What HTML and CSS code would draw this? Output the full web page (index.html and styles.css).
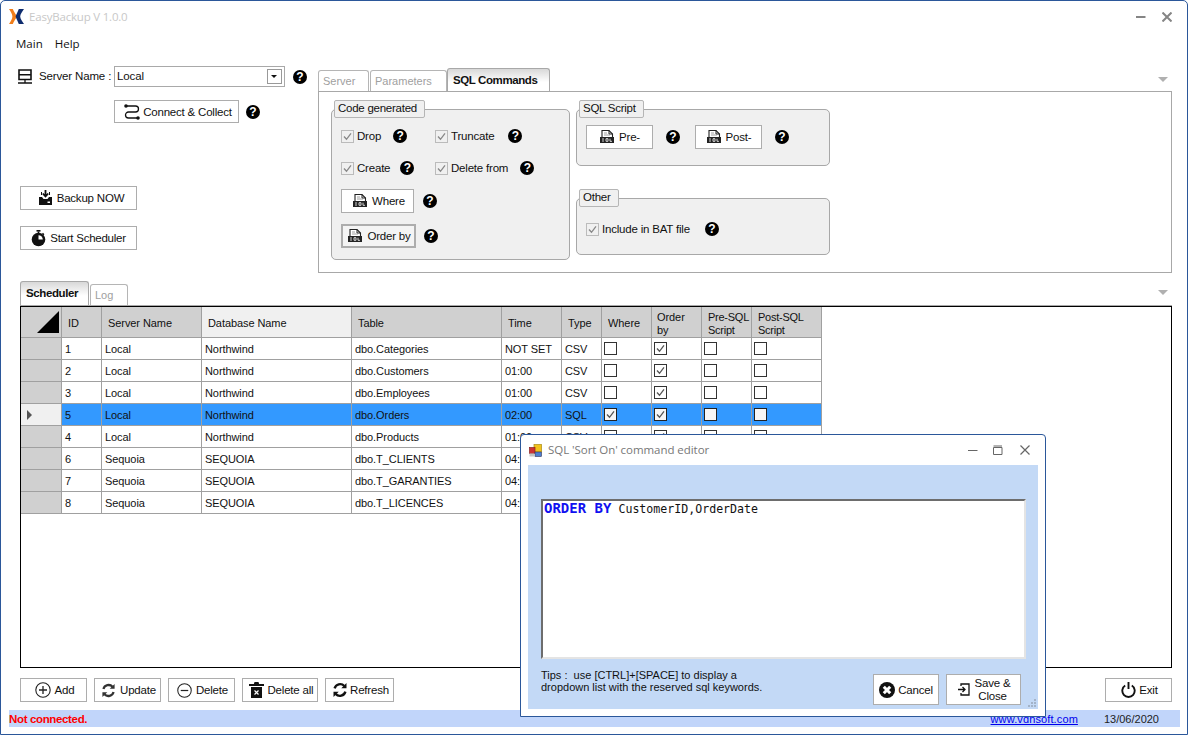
FILE: index.html
```html
<!DOCTYPE html>
<html lang="en">
<head>
<meta charset="utf-8">
<title>EasyBackup</title>
<link rel="stylesheet" href="styles.css">
</head>
<body>
<svg class="defs" width="0" height="0" aria-hidden="true">
  <symbol id="i-sql" viewBox="0 0 16 16">
    <path d="M3 1.500h7l3.500 3.500v8.500H3z" fill="#fff" stroke="#222" stroke-width="1.100"/>
    <path d="M10 1.500V5h3.500" fill="none" stroke="#222" stroke-width="1"/>
    <path d="M5 4h3M5 6h6" stroke="#888" stroke-width=".8"/>
    <rect x="1" y="8" width="14" height="6" fill="#222"/>
    <path d="M3 10h2M3 12h2M7 9.700v2.600h2V9.700zM11 9.700v2.600h2" fill="none" stroke="#fff" stroke-width=".8"/>
  </symbol>
  <symbol id="i-check" viewBox="0 0 13 13">
    <path d="M3 6.500l2.500 2.800L10 3.400" fill="none" stroke="currentColor" stroke-width="1.300"/>
  </symbol>
  <symbol id="i-refresh" viewBox="0 0 16 16">
    <path d="M2.600 6.400A5.700 5.700 0 0 1 12.300 4M13.400 9.600A5.700 5.700 0 0 1 3.700 12" fill="none" stroke="currentColor" stroke-width="2.400"/>
    <path d="M14.500 1v5.200H9.300zM1.500 15V9.800h5.200z" fill="currentColor"/>
  </symbol>
</svg>

<div class="window">
  <header class="titlebar">
    <svg class="logo" viewBox="0 0 15 15" width="15" height="15">
      <path d="M0 0h3.800C4.800 3 7 5 7.800 7.500 7 10 4.800 12 3.800 15H0C1.800 12 3.400 10 3.400 7.500 3.400 5 1.800 3 0 0z" fill="#f07d1a"/>
      <path d="M15 0h-5.200C8.800 3 7.300 5 6.600 7.500 7.300 10 8.800 12 9.800 15H15C13.200 12 11.200 10 11.200 7.500 11.200 5 13.200 3 15 0z" fill="#0e2c6e"/>
    </svg>
    <span class="app-title">EasyBackup V 1.0.0</span>
    <span class="win-controls">
      <svg width="10" height="10" viewBox="0 0 10 10"><path d="M0 5h9.500" stroke="#858585" stroke-width="2"/></svg>
      <svg width="10" height="10" viewBox="0 0 10 10"><path d="M.5.5l9 9M9.500.5l-9 9" stroke="#858585" stroke-width="2"/></svg>
    </span>
  </header>

  <nav class="menu"><span>Main</span><span>Help</span></nav>

  <section class="top">
    <div class="side">
      <div class="server-row">
        <svg class="server-icon" width="14" height="15" viewBox="0 0 14 15">
          <path d="M1 1h12v4.700H1zM1 5.700h12v4.800H1z" fill="none" stroke="#111" stroke-width="1.600"/>
          <path d="M7 10.500V14M0 14h14" stroke="#111" stroke-width="1.300"/>
        </svg>
        <label class="server-label">Server Name :</label>
        <div class="combo"><span>Local</span><i class="combo-btn"></i></div>
        <span class="help">?</span>
      </div>
      <div class="connect-row">
        <button class="btn connect">
          <svg width="18" height="18" viewBox="0 0 18 18"><path d="M3 3h9.500a2.500 2.500 0 0 1 0 6h-7a3 3 0 0 0 0 6H14" fill="none" stroke="#111" stroke-width="1.300"/><circle cx="3" cy="3" r="1.800" fill="#111"/><circle cx="15" cy="15" r="1.800" fill="#111"/></svg>
          Connect &amp; Collect
        </button>
        <span class="help">?</span>
      </div>
      <button class="btn wide backup">
        <svg width="15" height="16" viewBox="0 0 15 16"><path d="M1 7h3l1.500 2h4L11 7h3v8H1z" fill="#111"/><path d="M7.500 0v6M4.800 3.500l2.700 3 2.700-3" fill="none" stroke="#111" stroke-width="1.800"/><path d="M3.500 2v3M11.500 2v3" stroke="#111"/><rect x="9.500" y="11.500" width="2.500" height="1.500" fill="#fff"/></svg>
        Backup NOW
      </button>
      <button class="btn wide sched">
        <svg width="15" height="17" viewBox="0 0 15 17"><rect x="5.500" y="0" width="4" height="1.600" fill="#111"/><path d="M6.700 1.500h1.600V3H6.700zM12 2.800l1.400 1.400-1 1-1.400-1.400z" fill="#111"/><circle cx="7.500" cy="9.500" r="6.800" fill="#111"/><path d="M7.500 9.500V5.200a4.300 4.300 0 0 1 4.300 4.300z" fill="#fff"/></svg>
        Start Scheduler
      </button>
    </div>

    <div class="options">
      <div class="tabs">
        <span class="tab">Server</span>
        <span class="tab params">Parameters</span>
        <span class="tab active sql">SQL Commands</span>
        <i class="fold"></i>
      </div>
      <div class="panel">
        <fieldset class="group code">
          <span class="legend">Code generated</span>
          <div class="checks">
            <div class="check-line"><i class="box"><svg width="13" height="13"><use href="#i-check"/></svg></i><span>Drop</span><span class="help">?</span></div>
            <div class="check-line"><i class="box"><svg width="13" height="13"><use href="#i-check"/></svg></i><span>Truncate</span><span class="help h-trunc">?</span></div>
            <div class="check-line"><i class="box"><svg width="13" height="13"><use href="#i-check"/></svg></i><span>Create</span><span class="help h-create">?</span></div>
            <div class="check-line"><i class="box"><svg width="13" height="13"><use href="#i-check"/></svg></i><span>Delete from</span><span class="help">?</span></div>
          </div>
          <div class="cmd-line where">
            <button class="btn where-btn"><svg width="16" height="16"><use href="#i-sql"/></svg>Where</button>
            <span class="help">?</span>
          </div>
          <div class="cmd-line order">
            <button class="btn order-btn"><svg width="16" height="16"><use href="#i-sql"/></svg>Order by</button>
            <span class="help">?</span>
          </div>
        </fieldset>
        <div class="right-groups">
          <fieldset class="group script">
            <span class="legend">SQL Script</span>
            <div class="script-line">
              <button class="btn script-btn"><svg width="16" height="16"><use href="#i-sql"/></svg>Pre-</button>
              <span class="help">?</span>
              <button class="btn script-btn"><svg width="16" height="16"><use href="#i-sql"/></svg>Post-</button>
              <span class="help">?</span>
            </div>
          </fieldset>
          <fieldset class="group other">
            <span class="legend">Other</span>
            <div class="check-line"><i class="box"><svg width="13" height="13"><use href="#i-check"/></svg></i><span>Include in BAT file</span><span class="help bat">?</span></div>
          </fieldset>
        </div>
      </div>
    </div>
  </section>

  <div class="tabs lower">
    <span class="tab active sched-tab">Scheduler</span>
    <span class="tab log-tab">Log</span>
    <i class="fold"></i>
  </div>

  <div class="frame">
    <table class="grid">
      <colgroup>
        <col class="c-h"><col class="c-id"><col class="c-srv"><col class="c-db"><col class="c-tbl"><col class="c-time"><col class="c-type"><col class="c-chk"><col class="c-chk"><col class="c-chk"><col class="c-post">
      </colgroup>
      <thead>
        <tr>
          <th class="corner"><i></i></th><th>ID</th><th>Server Name</th><th class="sorted">Database Name</th><th>Table</th><th>Time</th><th>Type</th><th>Where</th><th class="order-head">Order<br>by</th><th class="tight">Pre-SQL Script</th><th class="tight">Post-SQL<br>Script</th>
        </tr>
      </thead>
      <tbody>
        <tr><th></th><td>1</td><td>Local</td><td>Northwind</td><td>dbo.Categories</td><td>NOT SET</td><td>CSV</td><td><i class="cell-box"></i></td><td><i class="cell-box"><svg width="13" height="13"><use href="#i-check"/></svg></i></td><td><i class="cell-box"></i></td><td><i class="cell-box"></i></td></tr>
        <tr><th></th><td>2</td><td>Local</td><td>Northwind</td><td>dbo.Customers</td><td>01:00</td><td>CSV</td><td><i class="cell-box"></i></td><td><i class="cell-box"><svg width="13" height="13"><use href="#i-check"/></svg></i></td><td><i class="cell-box"></i></td><td><i class="cell-box"></i></td></tr>
        <tr><th></th><td>3</td><td>Local</td><td>Northwind</td><td>dbo.Employees</td><td>01:00</td><td>CSV</td><td><i class="cell-box"></i></td><td><i class="cell-box"><svg width="13" height="13"><use href="#i-check"/></svg></i></td><td><i class="cell-box"></i></td><td><i class="cell-box"></i></td></tr>
        <tr class="selected"><th><i class="row-arrow"></i></th><td>5</td><td>Local</td><td>Northwind</td><td>dbo.Orders</td><td>02:00</td><td>SQL</td><td><i class="cell-box"><svg width="13" height="13"><use href="#i-check"/></svg></i></td><td><i class="cell-box"><svg width="13" height="13"><use href="#i-check"/></svg></i></td><td><i class="cell-box"></i></td><td><i class="cell-box"></i></td></tr>
        <tr><th></th><td>4</td><td>Local</td><td>Northwind</td><td>dbo.Products</td><td>01:00</td><td>CSV</td><td><i class="cell-box"></i></td><td><i class="cell-box"><svg width="13" height="13"><use href="#i-check"/></svg></i></td><td><i class="cell-box"></i></td><td><i class="cell-box"></i></td></tr>
        <tr><th></th><td>6</td><td>Sequoia</td><td>SEQUOIA</td><td>dbo.T_CLIENTS</td><td>04:00</td><td>CSV</td><td><i class="cell-box"></i></td><td><i class="cell-box"></i></td><td><i class="cell-box"></i></td><td><i class="cell-box"></i></td></tr>
        <tr><th></th><td>7</td><td>Sequoia</td><td>SEQUOIA</td><td>dbo.T_GARANTIES</td><td>04:00</td><td>CSV</td><td><i class="cell-box"></i></td><td><i class="cell-box"></i></td><td><i class="cell-box"></i></td><td><i class="cell-box"></i></td></tr>
        <tr><th></th><td>8</td><td>Sequoia</td><td>SEQUOIA</td><td>dbo.T_LICENCES</td><td>04:00</td><td>CSV</td><td><i class="cell-box"></i></td><td><i class="cell-box"></i></td><td><i class="cell-box"></i></td><td><i class="cell-box"></i></td></tr>
      </tbody>
    </table>
  </div>

  <div class="actions">
    <button class="btn act add"><svg width="16" height="16" viewBox="0 0 16 16"><circle cx="8" cy="8" r="7.200" fill="none" stroke="#222" stroke-width="1.100"/><path d="M8 4v8M4 8h8" stroke="#222" stroke-width="1.300"/></svg>Add</button>
    <button class="btn act update"><svg class="ic-grey" width="15" height="15"><use href="#i-refresh"/></svg>Update</button>
    <button class="btn act add"><svg width="15" height="15" viewBox="0 0 16 16"><circle cx="8" cy="8" r="7.200" fill="none" stroke="#222" stroke-width="1.100"/><path d="M4 8h8" stroke="#222" stroke-width="1.300"/></svg>Delete</button>
    <button class="btn act delall"><svg width="15" height="16" viewBox="0 0 15 16"><path d="M5.500 0h4l.6 2H15v2H0V2h4.900z" fill="#111"/><path d="M2 5h11v11H2z" fill="#111"/><path d="M5.500 8.500l4 4M9.500 8.500l-4 4" stroke="#fff" stroke-width="1.200"/></svg>Delete all</button>
    <button class="btn act refresh"><svg class="ic-dark" width="16" height="16"><use href="#i-refresh"/></svg>Refresh</button>
    <button class="btn act exit"><svg width="15" height="16" viewBox="0 0 15 16"><path d="M4.200 3.500a6.200 6.200 0 1 0 6.600 0" fill="none" stroke="#111" stroke-width="1.900"/><path d="M7.500 0v7" stroke="#111" stroke-width="1.900"/></svg>Exit</button>
  </div>

  <footer class="status">
    <span class="not-conn">Not connected.</span>
    <a class="site" href="#">www.vdhsoft.com</a>
    <span class="date">13/06/2020</span>
  </footer>

  <aside class="dialog">
    <div class="dlg-title">
      <svg width="13" height="13" viewBox="0 0 13 13"><rect x="5" y=".5" width="7.500" height="7.500" fill="#f2c21d" stroke="#a88a12" stroke-width=".7"/><rect x=".5" y="3.500" width="5.500" height="6" fill="#c33" stroke="#822" stroke-width=".7"/><rect x="6" y="8" width="6.500" height="4.500" fill="#4d7fd0" stroke="#335" stroke-width=".6"/><rect x=".5" y="9.500" width="5" height="3" fill="#c4c4c4"/></svg>
      <span class="dlg-name">SQL 'Sort On' command editor</span>
      <span class="dlg-controls">
        <svg width="10" height="10" viewBox="0 0 10 10"><path d="M0 5.500h9.500" stroke="#666"/></svg>
        <svg width="10" height="10" viewBox="0 0 10 10"><path d="M.5 2.500h8.500v7H.5zM.5 1h8.500" fill="none" stroke="#666"/></svg>
        <svg width="10" height="10" viewBox="0 0 10 10"><path d="M.5.5l9 9M9.500.5l-9 9" stroke="#666" stroke-width="1.200"/></svg>
      </span>
    </div>
    <div class="dlg-body">
      <div class="editor"><b>ORDER BY</b> <span>CustomerID,OrderDate</span></div>
      <div class="dlg-foot">
        <p class="tips">Tips :&nbsp; use [CTRL]+[SPACE] to display a<br>dropdown list with the reserved sql keywords.</p>
        <button class="btn dlg-btn cancel"><svg width="16" height="16" viewBox="0 0 16 16"><circle cx="8" cy="8" r="8" fill="#111"/><path d="M4.800 4.800l6.400 6.400M11.200 4.800l-6.400 6.400" stroke="#fff" stroke-width="3"/></svg>Cancel</button>
        <button class="btn dlg-btn save"><svg width="13" height="13" viewBox="0 0 13 13"><path d="M4 3V1h8v11H4v-2" fill="none" stroke="#111" stroke-width="1.300"/><path d="M1 6.500h7M5.500 4l2.500 2.500L5.500 9" fill="none" stroke="#111" stroke-width="1.300"/></svg><span>Save &amp;<br>Close</span></button>
      </div>
      <svg class="grip" width="9" height="9" viewBox="0 0 9 9"><path d="M6 0h2v2H6zM3 3h2v2H3zM6 3h2v2H6zM0 6h2v2H0zM3 6h2v2H3zM6 6h2v2H6z" fill="#a3b3c8"/></svg>
    </div>
  </aside>
</div>
</body>
</html>
```

FILE: styles.css
```css
* { box-sizing: border-box; }
html, body { margin: 0; padding: 0; }
body { width: 1188px; height: 735px; overflow: hidden; background: #fff; font: 11.500px "Liberation Sans", Arial, sans-serif; color: #111; }
.defs { position: absolute; }

.window { position: relative; width: 1188px; height: 735px; border: 1px solid #2b579a; border-radius: 5px 5px 0 0; padding: 0 15px 0 19px; background: #fff; }

.titlebar { height: 31px; margin-left: -11px; display: flex; align-items: center; gap: 5px; }
.logo { display: block; }
.app-title { font: 11.500px "Open Sans", sans-serif; color: #c8c8c8; letter-spacing: -.2px; }
.win-controls { margin-left: auto; display: flex; gap: 16px; padding-top: 1px; }

.menu { height: 24px; margin-left: -4px; padding-bottom: 2px; display: flex; gap: 12px; align-items: center; font: 11.500px "Open Sans", sans-serif; color: #111; }

.top { display: flex; height: 217px; }
.side { width: 298px; padding-top: 10px; flex: none; }
.server-row { display: flex; align-items: center; height: 21px; margin-left: -2px; }
.server-label { margin-left: 7px; width: 75px; padding-bottom: 2px; letter-spacing: -.15px; }
.combo { width: 171px; height: 21px; border: 1px solid #a9a9a9; display: flex; align-items: center; justify-content: space-between; padding: 0 2px; }
.combo span { letter-spacing: -.1px; padding-bottom: 1px; }
.combo-btn { width: 15px; height: 15px; border: 1px solid #999; position: relative; display: block; }
.combo-btn::after { content: ""; position: absolute; left: 3px; top: 5px; border: 3px solid transparent; border-top: 3px solid #111; border-bottom: 0; }
.server-row .help { margin-left: 8px; }
.connect-row { display: flex; align-items: center; margin: 13px 0 0 94px; gap: 7px; }

.help { display: inline-flex; width: 14px; height: 14px; flex: none; align-items: center; justify-content: center; border-radius: 50%; background: #000; color: #fff; font: bold 12px/14px "Liberation Sans", sans-serif; }

.btn { display: inline-flex; align-items: center; justify-content: center; gap: 4px; padding: 0; height: 24px; background: #fff; border: 1px solid #adadad; border-radius: 0; color: #111; font: 11.500px "Liberation Sans", sans-serif; letter-spacing: -.2px; white-space: nowrap; }
.btn svg { flex: none; }
.connect { width: 125px; height: 23px; gap: 2px; padding-left: 2px; }
.wide { width: 117px; display: flex; }
.backup { margin-top: 63px; padding-left: 5px; }
.sched { margin-top: 16px; letter-spacing: -.25px; }

.options { flex: 1; padding-top: 12px; }
.tabs { display: flex; align-items: flex-end; height: 23px; position: relative; }
.tab { display: block; height: 21px; border: 1px solid #b5b5b5; border-bottom: 0; border-radius: 3px 3px 0 0; margin-right: 1px; padding: 4px 0 0 4px; width: 51px; font-size: 11px; color: #a0a0a0; }
.params { width: 77px; margin-right: 0; }
.tab.active { height: 23px; color: #111; font-weight: bold; font-size: 11.500px; letter-spacing: -.4px; background: linear-gradient(#d8d8d8, #fff 60%); border-color: #a8a8a8; }
.sql { width: 103px; padding: 5px 0 0 5px; }
.fold { margin-left: auto; margin-right: 4px; margin-bottom: 9px; width: 0; height: 0; border: 5px solid transparent; border-top: 5px solid #b0b0b0; border-bottom: 0; }

.panel { height: 182px; border: 1px solid #a8a8a8; padding: 8px 0 0 12px; display: flex; gap: 6px; }
.group { position: relative; margin: 9px 0 0; padding: 0; border: 1px solid #a8a8a8; border-radius: 5px; background: #f0f0f0; min-width: 0; }
.legend { position: absolute; top: -10px; left: 2px; height: 18px; padding: 0 7px 0 3px; line-height: 15px; border: 1px solid #b5b5b5; border-radius: 2px; background: #f0f0f0; letter-spacing: -.25px; }
.code { width: 239px; height: 151px; padding: 18px 0 0 9px; }
.checks { display: grid; grid-template-columns: 94px 120px; row-gap: 16px; }
.check-line { display: flex; align-items: center; height: 16px; letter-spacing: -.2px; }
.box { width: 13px; height: 13px; margin-right: 3px; border: 1px solid #bbb; background: #f0f0f0; color: #888; display: block; flex: none; }
.box svg { display: block; margin: -1px; }
.check-line .help { margin-left: 12px; }
.check-line .h-trunc { margin-left: 14px; }
.check-line .h-create { margin-left: 10px; }
.cmd-line { display: flex; align-items: center; gap: 9px; }
.where { margin-top: 13px; }
.order { margin-top: 11px; }
.where-btn { width: 73px; padding-left: 2px; }
.order-btn { width: 75px; border-width: 2px; background: #f4f4f4; gap: 4px; padding-left: 1px; }
.order-btn + .help { margin-left: -1px; }

.right-groups { width: 254px; }
.script { height: 57px; padding: 15px 0 0 9px; }
.script-line { display: flex; align-items: center; }
.script-btn { width: 67px; }
.script-line .help { margin: 0 15px 0 13px; }
.other { height: 57px; margin-top: 32px; padding: 22px 0 0 9px; }
.check-line .help.bat { margin-left: 15px; }

.lower { margin-top: 8px; height: 25px; border-bottom: 1px solid #a8a8a8; }
.sched-tab.active { width: 69px; height: 24px; padding: 5px 0 0 5px; margin-right: 1px; }
.log-tab { width: 38px; }
.lower .fold { margin-bottom: 10px; }

.frame { height: 362px; border: 1px solid #000; background: #fff; }
.grid { table-layout: fixed; width: 801px; border-collapse: separate; border-spacing: 0; font-size: 11px; letter-spacing: -.08px; }
.c-h { width: 41px; } .c-id { width: 40px; } .c-srv { width: 100px; } .c-db { width: 150px; } .c-tbl { width: 150px; } .c-time { width: 60px; } .c-type { width: 40px; } .c-chk { width: 50px; } .c-post { width: 70px; }
.grid th, .grid td { border-right: 1px solid #a0a0a0; border-bottom: 1px solid #a0a0a0; padding: 0; overflow: hidden; }
.grid thead th { height: 31px; background: #d0d0d0; font-weight: normal; text-align: left; padding: 3px 0 0 6px; line-height: 13px; }
.grid thead th.sorted { background: #f0f0f0; }
.grid thead th.tight { letter-spacing: -.25px; }
.grid thead th.order-head { padding-left: 5px; }
.grid thead th.corner { padding: 0; }
.corner i { display: block; width: 0; height: 0; margin: 0 2px 0 auto; border-left: 22px solid transparent; border-bottom: 22px solid #000; }
.grid tbody th { background: #d0d0d0; height: 22px; text-align: left; padding-left: 6px; }
.grid tbody td { height: 22px; padding: 1px 0 0 3px; background: #fff; white-space: nowrap; }
.selected td { background: #3399ff !important; }
.selected th { background: #f0f0f0 !important; }
.row-arrow { display: block; width: 0; height: 0; border-left: 5px solid #555; border-top: 5px solid transparent; border-bottom: 5px solid transparent; }
.cell-box { display: block; width: 13px; height: 13px; margin: -2px 0 0 -1px; background: #fff; border: 1px solid #333; color: #555; }
.cell-box svg { display: block; margin: -1px; }
.selected .cell-box { background: #f6f6f6; border-color: #222; }

.actions { display: flex; margin-top: 10px; gap: 7px; }
.act { width: 67px; padding-left: 2px; }
.act.delall { width: 76px; }
.act.refresh { width: 69px; gap: 2px; }
.exit { margin-left: auto; gap: 3px; }
.ic-grey { color: #333; }
.ic-dark { color: #111; }

.status { display: flex; align-items: center; height: 17px; margin: 8px -8px 0 -11px; background: #c1d5fa; font-size: 11px; }
.not-conn { color: #f00; font-weight: bold; font-size: 11.500px; letter-spacing: -.35px; }
.site { margin-left: auto; color: #00e; text-decoration: underline; letter-spacing: .12px; }
.date { margin: 0 21px 0 26px; color: #222; }

.dialog { position: absolute; left: 519px; top: 433px; width: 526px; height: 283px; border: 1px solid #2b579a; border-radius: 4px 4px 0 0; background: #fff; padding: 0 7px 7px; display: flex; flex-direction: column; }
.dlg-title { height: 30px; display: flex; align-items: center; gap: 6px; margin-left: 1px; }
.dlg-name { font: 11.500px "Open Sans", sans-serif; color: #777; padding-bottom: 2px; letter-spacing: -.05px; }
.dlg-controls { margin-left: auto; margin-right: 8px; display: flex; gap: 15px; }
.dlg-controls svg:last-child { margin-left: 2px; }
.dlg-body { flex: 1; position: relative; background: #c3d9f6; padding: 34px 12px 0 13px; }
.editor { height: 160px; background: #fff; border: 2px solid; border-color: #6d6d6d #e4e4e4 #e4e4e4 #6d6d6d; padding: 0 0 0 1px; font: 11.600px/14px "DejaVu Sans Mono", monospace; color: #111; white-space: nowrap; }
.editor b { font-size: 14px; color: #1010f0; }
.dlg-foot { display: flex; align-items: flex-start; margin-top: 10px; }
.tips { margin: 0; font-size: 11px; line-height: 12px; width: 332px; flex: none; }
.dlg-btn { height: 31px; margin-top: 5px; }
.cancel { width: 66px; gap: 3px; }
.save { width: 75px; margin-left: 7px; gap: 5px; text-align: center; line-height: 13px; }
.grip { position: absolute; right: 1px; bottom: 1px; }
```
